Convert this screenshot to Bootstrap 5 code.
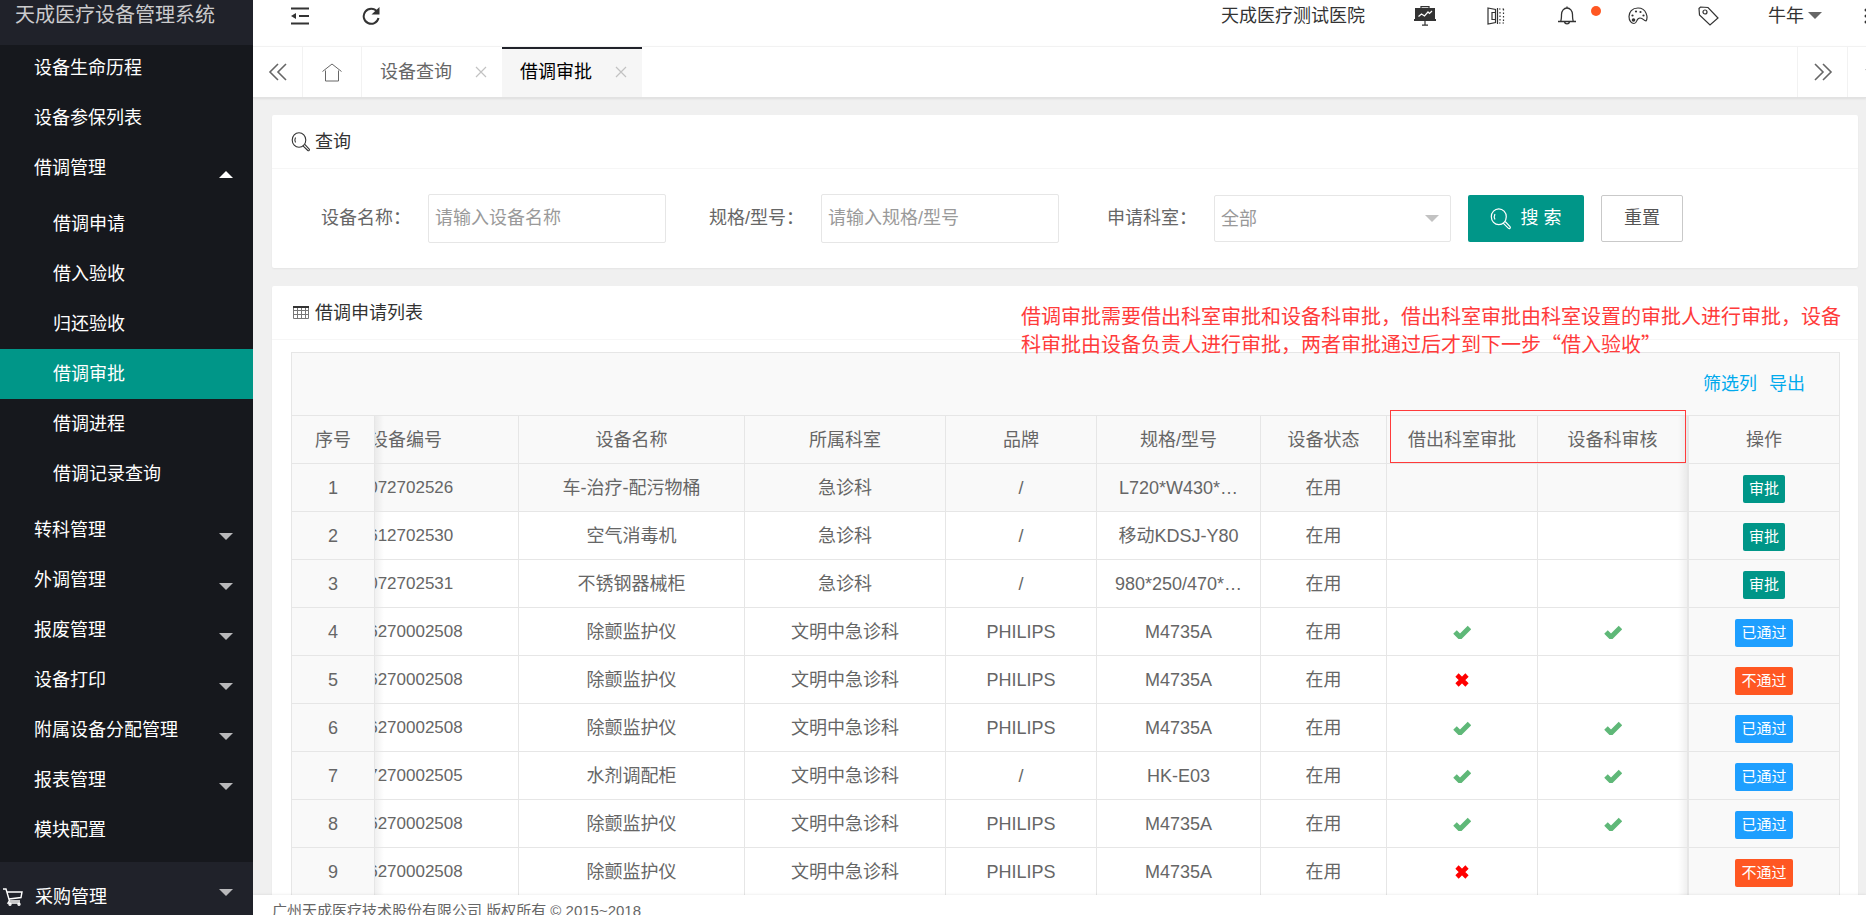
<!DOCTYPE html>
<html lang="zh-CN">
<head>
<meta charset="utf-8">
<meta name="viewport" content="width=device-width, initial-scale=1">
<title>天成医疗设备管理系统</title>
<link href="https://cdn.jsdelivr.net/npm/bootstrap@5.3.0/dist/css/bootstrap.min.css" rel="stylesheet">
<style>
body{font-family:"Liberation Sans","Noto Sans CJK SC",sans-serif;font-size:18px;line-height:24px;color:#666;background:#f0f0f0}
a{text-decoration:none;color:inherit}
svg{display:block;fill:none;stroke:currentColor;flex:none}
.app{height:100vh;overflow:hidden}
/* sidebar */
.side{width:253px;background:#20222a;color:#fff;flex:none}
.brand{height:45px;line-height:30px;font-size:20px;padding-left:15px;color:#cbcbcd}
.menu-group{background:#16181d;display:flow-root;padding-bottom:7px}
.menu-group>ul{margin-top:-2px}
.menu-link{display:flex;align-items:center;justify-content:space-between;height:50px;padding:0 20px 0 34px}
.sub-menu{padding:6px 0}
.sub-menu .menu-link{padding-left:53px}
.menu-link.active{background:#009688}
.caret-d,.caret-u{border:7px solid transparent;border-top-color:#b9b9bb;border-bottom:0;margin-top:12px}
.caret-u{border-top:0;border-bottom:7px solid #fff}
.menu-top{height:70px;padding-left:3px}
.menu-top .caret-d{margin-top:-9px}
/* top bars */
.main-col{min-width:0}
.topbar{height:46px;background:#fff;color:#333;flex:none}
.topbar .bar-inner{height:31px;padding-left:11px}
.top-btn{display:flex;align-items:center;justify-content:center;width:71px;height:30px;padding:0;border:0;background:none;color:#333;position:relative}
.dot-new{position:absolute;left:60px;top:5px;width:10px;height:10px;border-radius:50%;background:#ff5722}
.caret-user{border:7px solid transparent;border-top-color:#666;border-bottom:0}
.more-btn{width:40px;margin-right:-20px}
.tabbar{height:52px;background:#fff;border-top:1px solid #f2f2f2;border-bottom:1px solid #e2e2e2;box-shadow:0 1px 2px rgba(0,0,0,.08);flex:none}
.tab-ctl{width:50px;border:0;border-right:1px solid #f2f2f2;background:none;padding:0;color:#666;display:flex;align-items:center;justify-content:center}
.tab-ctl.home{width:59px;border-right:1px solid #f2f2f2}
.tab-ctl.next{border-left:1px solid #f2f2f2;width:51px}
.tab-ctl.more{margin-right:-32px;border:0}
.page-tab{width:140px;padding:0 15px 0 18px;display:flex;align-items:center;justify-content:space-between}
.page-tab.active{background:#f6f6f6;border-top:2px solid #20222a;padding-bottom:2px;color:#000}
.page-tab button{border:0;background:none;padding:0;color:#c2c2c2}
/* panels */
.content{padding:17px 8px 0 19px;flex:1 1 0;min-height:0;overflow:hidden}
.panel{background:#fff;border:0;border-radius:2px;box-shadow:0 1px 2px rgba(0,0,0,.05);position:relative}
.panel-head{height:54px;border-bottom:1px solid #f6f6f6;padding:0 19px;color:#333}
.list-panel{margin-top:18px}
.query{padding:25px 0}
.query label{text-align:right;padding:0 17px 2px 0;white-space:nowrap}
.query label.first{width:156px}
.query label.next{width:155px}
.box-in{width:238px;height:49px;border:1px solid #e6e6e6;border-radius:2px;padding:0 6px;color:#999;background:#fff}
.box-in::placeholder{color:#9a9a9a;opacity:1}
.sel-wrap{position:relative}
.sel-wrap select{height:47px;width:237px;appearance:none}
.sel-wrap::after{content:"";position:absolute;right:12px;top:20px;border:7px solid transparent;border-top-color:#c2c2c2;border-bottom:0;pointer-events:none}
.btn-q{height:47px;border-radius:2px;padding:0;font-size:18px;display:flex;align-items:center;justify-content:center}
.btn-go{width:116px;background:#009688;color:#fff;margin-left:17px;gap:8px}
.btn-re{width:82px;border:1px solid #c9c9c9;background:#fff;color:#555;margin-left:17px}
/* list */
.tip{position:absolute;right:13px;top:16px;width:824px;z-index:3;margin:0;font-family:"Noto Sans CJK SC",sans-serif;font-size:20px;line-height:28px;color:#ff3b3b}
.list-body{padding:12px 18px 0 19px}
.grid-box{border:1px solid #e6e6e6;position:relative}
.tools{height:63px;background:#f9f9f9;border-bottom:1px solid #e6e6e6;padding-right:34px;gap:12px;color:#01aaed}
.hl{position:absolute;right:153px;top:57px;width:296px;height:53px;border:1px solid #ff3b3b;pointer-events:none}
.list{table-layout:fixed;width:100%;border-collapse:separate;border-spacing:0;text-align:center}
.list th,.list td{height:48px;padding:0;font-weight:400;border-right:1px solid #e6e6e6;border-bottom:1px solid #e6e6e6;overflow:hidden;white-space:nowrap}
.list thead th,.list tbody tr.on td,.list td:first-child,.list td:last-child{background-color:#f9f9f9}
.list th:nth-child(2),.list td:nth-child(2){background-image:linear-gradient(90deg,rgba(0,0,0,.06),transparent 9px)}
.list th:nth-child(9),.list td:nth-child(9){background-image:linear-gradient(270deg,rgba(0,0,0,.06),transparent 9px);border-right-width:2px}
.list th:last-child,.list td:last-child{border-right:0}
.list td svg{margin:0 auto}
.scrolled{margin-left:-81px}
.list td .scrolled{font-size:17px}
.ok{color:#5fb878}.no{color:#f00}
.tag-btn{height:28px;line-height:28px;border:0;border-radius:2px;padding:0 6px;font-size:15px;color:#fff;background:#009688;display:inline-block;vertical-align:middle;margin-top:2px}
.tag-btn.pass{background:#1e9fff}.tag-btn.fail{background:#ff5722}
.foot{height:20px;line-height:32px;font-size:15px;background:#fff;padding-left:19px;box-shadow:0 -1px 2px rgba(0,0,0,.06);flex:none;z-index:2}
</style>
</head>
<body>
<svg width="0" height="0" class="position-absolute" aria-hidden="true">
  <symbol id="i-ok" viewBox="0 0 18 14"><path d="M2 7l5 5 9.500-9.500" stroke-width="5" stroke="currentColor" fill="none"/></symbol>
  <symbol id="i-no" viewBox="0 0 14 14"><path d="M2 2l10 10M12 2L2 12" stroke-width="4.6" stroke="currentColor"/></symbol>
  <symbol id="i-x" viewBox="0 0 12 12"><path d="M1 1l10 10M11 1L1 11" stroke-width="1.2" stroke="currentColor"/></symbol>
  <symbol id="i-find" viewBox="0 0 20 20"><ellipse cx="8" cy="8" rx="6.800" ry="7.200" stroke-width="1.1"/><path d="M4.500 5.500c-.8 1.500-.8 3.500 0 5M12 13.800l4.800 4.700c1 .800 2.200-.600 1.400-1.500l-4.400-4.700" stroke-width="1.100"/></symbol>
</svg>
<div class="app d-flex">
  <nav class="side" aria-label="主菜单">
    <div class="brand">天成医疗设备管理系统</div>
    <div class="menu-group">
      <ul class="list-unstyled mb-0">
        <li><a class="menu-link" href="#">设备生命历程</a></li>
        <li><a class="menu-link" href="#">设备参保列表</a></li>
        <li><a class="menu-link" href="#">借调管理<span class="caret-u"></span></a>
          <ul class="list-unstyled sub-menu">
            <li><a class="menu-link" href="#">借调申请</a></li>
            <li><a class="menu-link" href="#">借入验收</a></li>
            <li><a class="menu-link" href="#">归还验收</a></li>
            <li><a class="menu-link active" href="#" aria-current="page">借调审批</a></li>
            <li><a class="menu-link" href="#">借调进程</a></li>
            <li><a class="menu-link" href="#">借调记录查询</a></li>
          </ul></li>
        <li><a class="menu-link" href="#">转科管理<span class="caret-d"></span></a></li>
        <li><a class="menu-link" href="#">外调管理<span class="caret-d"></span></a></li>
        <li><a class="menu-link" href="#">报废管理<span class="caret-d"></span></a></li>
        <li><a class="menu-link" href="#">设备打印<span class="caret-d"></span></a></li>
        <li><a class="menu-link" href="#">附属设备分配管理<span class="caret-d"></span></a></li>
        <li><a class="menu-link" href="#">报表管理<span class="caret-d"></span></a></li>
        <li><a class="menu-link" href="#">模块配置</a></li>
      </ul>
    </div>
    <a class="menu-link menu-top" href="#">
      <svg width="20" height="18" viewBox="0 0 20 18" stroke-width="1.4"><path d="M0 1h3l3.500 12H17M4 4h15l-1 5.500L6 11M6.500 12.500L5 15h12"/><circle cx="7" cy="16.300" r="1"/><circle cx="16" cy="16.300" r="1"/></svg>
      <span class="flex-grow-1 ps-1 ms-2">采购管理</span><span class="caret-d"></span></a>
  </nav>

  <div class="main-col d-flex flex-column flex-grow-1">
    <header class="topbar">
      <div class="bar-inner d-flex align-items-center">
        <button class="top-btn" type="button" aria-label="收起菜单"><svg width="20" height="18" viewBox="0 0 20 18" stroke-width="2"><path d="M1 1.500h18M9 9h10M1 16.500h18"/><path d="M1 9l5-3v6z" fill="currentColor" stroke="none"/></svg></button>
        <button class="top-btn" type="button" aria-label="刷新"><svg width="20" height="18" viewBox="0 0 20 18"><path d="M16 4.500A7.500 7.500 0 1 0 17.500 11" stroke-width="2"/><path d="M18.500 0v7.500h-8z" fill="currentColor" stroke="none"/></svg></button>
        <span class="ms-auto pe-4">天成医疗测试医院</span>
        <button class="top-btn" type="button" aria-label="数据看板"><svg width="22" height="20" viewBox="0 0 22 20"><path d="M1 2h20v11h1v2H0v-2h1z" fill="currentColor" stroke="none"/><path d="M7 2V.600h8V2M11 15v4M8 19.200h6" stroke-width="1.200"/><path d="M4.500 10.500l3-2.500 3 2 3.500-4 1.500 1.500L18 5" stroke="#fff" stroke-width="1.200"/></svg></button>
        <button class="top-btn" type="button" aria-label="镜像"><svg width="18" height="18" viewBox="0 0 18 18" stroke-width="1.200"><path d="M1 1l7.500 1.500v13L1 17zM8.500 5.500H5v7h3.500M10.500 1v16"/><path d="M12 2h5M16.500 2v14M12 16h5M13 5v9" stroke-dasharray="1.500 2"/></svg></button>
        <button class="top-btn" type="button" aria-label="通知"><svg width="20" height="19" viewBox="0 0 20 19" stroke-width="1.300"><path d="M1 15.500h18M3.500 15.500c1-1.500 1-3 1-7a5.500 6.500 0 0 1 11 0c0 4 0 5.500 1 7M7.500 16c.5 2.500 4.500 2.500 5 0M10 2V.500"/></svg><span class="dot-new"></span></button>
        <button class="top-btn" type="button" aria-label="主题"><svg width="20" height="18" viewBox="0 0 20 18"><path d="M10 1C4 1 1 5 1 9.500 1 14 3.500 16.500 6 16.500c3.500 0 2-5.500 6-5.500 3.500 0 3.500 3 6 3 2-3 1-13-8-13z" stroke-width="1.200"/><g fill="currentColor" stroke="none"><circle cx="5.500" cy="13" r="1.800"/><circle cx="4.500" cy="8.500" r="1.100"/><circle cx="8" cy="4.500" r="1.100"/><circle cx="12.500" cy="5" r="1.100"/><circle cx="15.500" cy="8.500" r="1.100"/></g></svg></button>
        <button class="top-btn" type="button" aria-label="标签"><svg width="21" height="20" viewBox="0 0 21 20" stroke-width="1.200"><path d="M1 2.500L2.500 1 10 1.500l10 10.500-8 7L1.500 9z"/><circle cx="7" cy="6" r="2"/></svg></button>
        <a class="d-flex align-items-center gap-1 ms-4" href="#">牛年<span class="caret-user"></span></a>
        <button class="top-btn more-btn ms-4" type="button" aria-label="更多"><svg width="4" height="18" viewBox="0 0 4 18"><g fill="currentColor" stroke="none"><circle cx="2" cy="3" r="1.500"/><circle cx="2" cy="9" r="1.500"/><circle cx="2" cy="15" r="1.500"/></g></svg></button>
      </div>
    </header>
    <div class="tabbar d-flex">
      <button class="tab-ctl" type="button" aria-label="向左"><svg width="20" height="18" viewBox="0 0 20 18" stroke-width="1.600"><path d="M10 1L2 9l8 8M18 1l-8 8 8 8"/></svg></button>
      <button class="tab-ctl home" type="button" aria-label="首页"><svg width="20" height="19" viewBox="0 0 20 19" stroke-width="1"><path d="M.500 8.500L10 1l9.500 7.500M3.500 7.500v10.500h13V7.500"/></svg></button>
      <div class="page-tab"><a href="#">设备查询</a><button type="button" aria-label="关闭"><svg width="12" height="12"><use href="#i-x"/></svg></button></div>
      <div class="page-tab active"><a href="#">借调审批</a><button type="button" aria-label="关闭"><svg width="12" height="12"><use href="#i-x"/></svg></button></div>
      <button class="tab-ctl next ms-auto" type="button" aria-label="向右"><svg width="20" height="18" viewBox="0 0 20 18" stroke-width="1.600"><path d="M2 1l8 8-8 8M10 1l8 8-8 8"/></svg></button>
      <button class="tab-ctl more" type="button" aria-label="标签操作"><svg width="16" height="9" viewBox="0 0 16 9" stroke-width="1.600"><path d="M1 1l7 7 7-7"/></svg></button>
    </div>

    <main class="content">
      <section class="panel">
        <div class="panel-head d-flex align-items-center gap-1"><svg width="20" height="20"><use href="#i-find"/></svg>查询</div>
        <form class="query d-flex flex-wrap align-items-center">
          <label class="first" for="q-name">设备名称：</label><input class="box-in" id="q-name" type="text" placeholder="请输入设备名称">
          <label class="next" for="q-model">规格/型号：</label><input class="box-in" id="q-model" type="text" placeholder="请输入规格/型号">
          <label class="next" for="q-dept">申请科室：</label><div class="sel-wrap"><select class="box-in" id="q-dept"><option>全部</option></select></div>
          <button class="btn btn-q btn-go" type="button"><svg width="22" height="22"><use href="#i-find"/></svg><span>搜 索</span></button>
          <button class="btn btn-q btn-re" type="reset">重置</button>
        </form>
      </section>

      <section class="panel list-panel">
        <div class="panel-head d-flex align-items-center gap-1"><svg width="20" height="13" viewBox="-2 0 20 13"><path d="M.5.500h15v12H.5zM.5 4.500h15M.5 8.500h15M4.500 1v11M8.500 1v11M12.500 1v11" stroke-width="1" stroke="#777"/><path d="M0 1h16" stroke-width="2"/></svg>借调申请列表</div>
        <p class="tip">借调审批需要借出科室审批和设备科审批，借出科室审批由科室设置的审批人进行审批，设备科审批由设备负责人进行审批，两者审批通过后才到下一步“借入验收”</p>
        <div class="list-body"><div class="grid-box">
          <div class="tools d-flex align-items-center justify-content-end"><a href="#">筛选列</a><a href="#">导出</a></div>
          <table class="list">
            <colgroup><col style="width:83px"><col style="width:144px"><col style="width:226px"><col style="width:201px"><col style="width:151px"><col style="width:164px"><col style="width:126px"><col style="width:151px"><col style="width:151px"><col style="width:150px"></colgroup>
            <thead><tr><th>序号</th><th><div class="scrolled">设备编号</div></th><th>设备名称</th><th>所属科室</th><th>品牌</th><th>规格/型号</th><th>设备状态</th><th>借出科室审批</th><th>设备科审核</th><th>操作</th></tr></thead>
            <tbody>
              <tr class="on"><td>1</td><td><div class="scrolled">2072702526</div></td><td>车-治疗-配污物桶</td><td>急诊科</td><td>/</td><td>L720*W430*…</td><td>在用</td><td></td><td></td><td><button type="button" class="tag-btn">审批</button></td></tr>
              <tr><td>2</td><td><div class="scrolled">2612702530</div></td><td>空气消毒机</td><td>急诊科</td><td>/</td><td>移动KDSJ-Y80</td><td>在用</td><td></td><td></td><td><button type="button" class="tag-btn">审批</button></td></tr>
              <tr><td>3</td><td><div class="scrolled">2072702531</div></td><td>不锈钢器械柜</td><td>急诊科</td><td>/</td><td>980*250/470*…</td><td>在用</td><td></td><td></td><td><button type="button" class="tag-btn">审批</button></td></tr>
              <tr><td>4</td><td><div class="scrolled">206270002508</div></td><td>除颤监护仪</td><td>文明中急诊科</td><td>PHILIPS</td><td>M4735A</td><td>在用</td><td><svg class="ok" width="18" height="14"><use href="#i-ok"/></svg></td><td><svg class="ok" width="18" height="14"><use href="#i-ok"/></svg></td><td><button type="button" class="tag-btn pass">已通过</button></td></tr>
              <tr><td>5</td><td><div class="scrolled">206270002508</div></td><td>除颤监护仪</td><td>文明中急诊科</td><td>PHILIPS</td><td>M4735A</td><td>在用</td><td><svg class="no" width="14" height="14"><use href="#i-no"/></svg></td><td></td><td><button type="button" class="tag-btn fail">不通过</button></td></tr>
              <tr><td>6</td><td><div class="scrolled">206270002508</div></td><td>除颤监护仪</td><td>文明中急诊科</td><td>PHILIPS</td><td>M4735A</td><td>在用</td><td><svg class="ok" width="18" height="14"><use href="#i-ok"/></svg></td><td><svg class="ok" width="18" height="14"><use href="#i-ok"/></svg></td><td><button type="button" class="tag-btn pass">已通过</button></td></tr>
              <tr><td>7</td><td><div class="scrolled">207270002505</div></td><td>水剂调配柜</td><td>文明中急诊科</td><td>/</td><td>HK-E03</td><td>在用</td><td><svg class="ok" width="18" height="14"><use href="#i-ok"/></svg></td><td><svg class="ok" width="18" height="14"><use href="#i-ok"/></svg></td><td><button type="button" class="tag-btn pass">已通过</button></td></tr>
              <tr><td>8</td><td><div class="scrolled">206270002508</div></td><td>除颤监护仪</td><td>文明中急诊科</td><td>PHILIPS</td><td>M4735A</td><td>在用</td><td><svg class="ok" width="18" height="14"><use href="#i-ok"/></svg></td><td><svg class="ok" width="18" height="14"><use href="#i-ok"/></svg></td><td><button type="button" class="tag-btn pass">已通过</button></td></tr>
              <tr><td>9</td><td><div class="scrolled">206270002508</div></td><td>除颤监护仪</td><td>文明中急诊科</td><td>PHILIPS</td><td>M4735A</td><td>在用</td><td><svg class="no" width="14" height="14"><use href="#i-no"/></svg></td><td></td><td><button type="button" class="tag-btn fail">不通过</button></td></tr>
            </tbody>
          </table>
          <div class="hl"></div>
        </div></div>
      </section>
    </main>
    <footer class="foot">广州天成医疗技术股份有限公司 版权所有 © 2015~2018</footer>
  </div>
</div>
<script src="https://cdn.jsdelivr.net/npm/bootstrap@5.3.0/dist/js/bootstrap.bundle.min.js"></script>
</body>
</html>
